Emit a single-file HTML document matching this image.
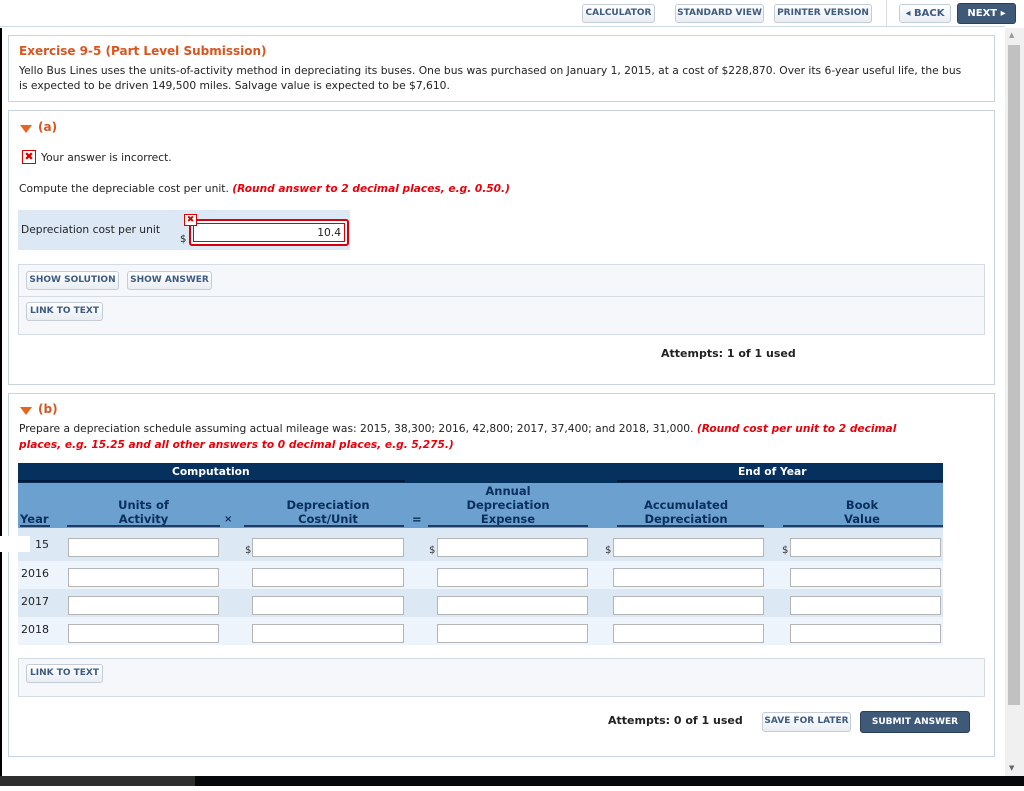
<!DOCTYPE html>
<html><head><meta charset="utf-8"><style>
*{box-sizing:border-box;margin:0;padding:0}
body{width:1024px;height:791px;position:relative;overflow:hidden;background:#fff;font-family:"DejaVu Sans","Liberation Sans",sans-serif;font-size:10.7px;color:#222}
.a{position:absolute}
.btn{position:absolute;height:19px;border:1px solid #c4ccd6;border-radius:3px;background:linear-gradient(#fff,#e9edf2);color:#3d5b80;font-weight:bold;font-size:9px;text-align:center;line-height:17px;white-space:nowrap}
.dk{background:#3f5a78;border-color:#2c4058;color:#fff}
.box{position:absolute;border:1px solid #c8d4e2;background:#fff}
.panel{position:absolute;border:1px solid #d3dbe5;background:#f5f7fa}
.inp{position:absolute;height:19px;border:1px solid #b5b5b5;background:#fff}
.red{color:#e8000b;font-style:italic;font-weight:bold;font-size:10.6px}
.or{color:#d9541e}
.tri{position:absolute;width:0;height:0;border-left:6px solid transparent;border-right:6px solid transparent;border-top:8px solid #e8631c}
.hd{position:absolute;color:#0a2f5c;font-weight:bold;font-size:11.5px;text-align:center;line-height:14px}
.ul{position:absolute;height:2px;background:#1e3d66;top:525px}
.yr{position:absolute;left:21px;font-size:11px}
.d{position:absolute;font-size:10px;color:#333}
</style></head><body>
<div class="a" style="left:0;top:26px;width:1005px;height:1px;background:#d0d8e2"></div>
<div class="btn" style="left:582px;top:4px;width:73px">CALCULATOR</div>
<div class="btn" style="left:675px;top:4px;width:89px">STANDARD VIEW</div>
<div class="btn" style="left:774px;top:4px;width:98px">PRINTER VERSION</div>
<div class="a" style="left:886px;top:0;width:1px;height:26px;background:#d8dde3"></div>
<div class="btn" style="left:899px;top:4px;width:52px;font-size:10px">◂ BACK</div>
<div class="btn dk" style="left:957px;top:3px;width:59px;height:21px;line-height:19px;font-size:10px">NEXT ▸</div>
<div class="a" style="left:1005px;top:28px;width:19px;height:748px;background:#f0f0f0"></div>
<div class="a" style="left:1008px;top:45px;width:12px;height:660px;background:#c1c1c1"></div>
<div class="a" style="left:1009px;top:31px;font-size:7px;color:#999">▲</div>
<div class="a" style="left:1009px;top:764px;font-size:7px;color:#666">▼</div>
<div class="a" style="left:0;top:28px;width:2px;height:748px;background:#000"></div>

<div class="box" style="left:8px;top:35px;width:987px;height:67px"></div>
<div class="a or" style="left:19px;top:44px;font-weight:bold;font-size:12px">Exercise 9-5 (Part Level Submission)</div>
<div class="a" style="left:19px;top:63px;width:945px;line-height:15px">Yello Bus Lines uses the units-of-activity method in depreciating its buses. One bus was purchased on January 1, 2015, at a cost of $228,870. Over its 6-year useful life, the bus is expected to be driven 149,500 miles. Salvage value is expected to be $7,610.</div>

<div class="box" style="left:8px;top:110px;width:987px;height:275px"></div>
<div class="tri" style="left:20px;top:125px"></div>
<div class="a or" style="left:38px;top:120px;font-size:12px;font-weight:bold">(a)</div>
<div class="a" style="left:22px;top:150px;width:14px;height:14px;border:1px solid #d00;color:#d00;font-size:11px;font-weight:bold;text-align:center;line-height:12px">✖</div>
<div class="a" style="left:41px;top:151px">Your answer is incorrect.</div>
<div class="a" style="left:19px;top:182px">Compute the depreciable cost per unit. <span class="red">(Round answer to 2 decimal places, e.g. 0.50.)</span></div>
<div class="a" style="left:18px;top:210px;width:332px;height:40px;background:#dde8f5"></div>
<div class="a" style="left:21px;top:223px">Depreciation cost per unit</div>
<div class="a" style="left:180px;top:234px;font-size:10px">$</div>
<div class="a" style="left:189px;top:219px;width:160px;height:27px;border:2px solid #d8000c;border-radius:3px;background:#fff;padding:2px"><div style="border:1px solid #d8000c;height:100%;text-align:right;padding-right:3px;line-height:17px">10.4</div></div>
<div class="a" style="left:184px;top:214px;width:13px;height:12px;border:1px solid #d00;background:#fff;color:#d00;font-size:9px;font-weight:bold;text-align:center;line-height:10px">✖</div>
<div class="panel" style="left:18px;top:264px;width:967px;height:71px"></div>
<div class="a" style="left:19px;top:296px;width:965px;height:1px;background:#d3dbe5"></div>
<div class="btn" style="left:26px;top:271px;width:93px">SHOW SOLUTION</div>
<div class="btn" style="left:127px;top:271px;width:85px">SHOW ANSWER</div>
<div class="btn" style="left:26px;top:302px;width:77px">LINK TO TEXT</div>
<div class="a" style="left:661px;top:347px;font-weight:bold;font-size:11px">Attempts: 1 of 1 used</div>

<div class="box" style="left:8px;top:393px;width:987px;height:364px"></div>
<div class="tri" style="left:20px;top:407px"></div>
<div class="a or" style="left:38px;top:402px;font-size:12px;font-weight:bold">(b)</div>
<div class="a" style="left:19px;top:421px;width:912px;line-height:15px">Prepare a depreciation schedule assuming actual mileage was: 2015, 38,300; 2016, 42,800; 2017, 37,400; and 2018, 31,000. <span class="red">(Round cost per unit to 2 decimal places, e.g. 15.25 and all other answers to 0 decimal places, e.g. 5,275.)</span></div>

<div class="a" style="left:18px;top:463px;width:925px;height:20px;background:#06305e"></div>
<div class="a" style="left:18px;top:480px;width:387px;height:2px;background:#021a38"></div>
<div class="a" style="left:617px;top:480px;width:326px;height:2px;background:#021a38"></div>
<div class="a" style="left:172px;top:465px;color:#fff;font-weight:bold">Computation</div>
<div class="a" style="left:738px;top:465px;color:#fff;font-weight:bold">End of Year</div>
<div class="a" style="left:18px;top:483px;width:925px;height:45px;background:#6ba0cf"></div>
<div class="hd" style="left:20px;top:512px;text-align:left">Year</div>
<div class="ul" style="left:20px;width:30px"></div>
<div class="hd" style="left:68px;top:498px;width:151px">Units of<br>Activity</div>
<div class="ul" style="left:67px;width:153px"></div>
<div class="hd" style="left:224px;top:513px;font-size:10px">×</div>
<div class="hd" style="left:252px;top:498px;width:152px">Depreciation<br>Cost/Unit</div>
<div class="ul" style="left:244px;width:160px"></div>
<div class="hd" style="left:412px;top:512px">=</div>
<div class="hd" style="left:428px;top:484px;width:160px">Annual<br>Depreciation<br>Expense</div>
<div class="ul" style="left:428px;width:160px"></div>
<div class="hd" style="left:608px;top:498px;width:156px">Accumulated<br>Depreciation</div>
<div class="ul" style="left:617px;width:147px"></div>
<div class="hd" style="left:783px;top:498px;width:158px">Book<br>Value</div>
<div class="ul" style="left:783px;width:160px"></div>

<div class="a" style="left:18px;top:528px;width:925px;height:33px;background:#dde8f5"></div>
<div class="a" style="left:18px;top:561px;width:925px;height:28px;background:#eef4fb"></div>
<div class="a" style="left:18px;top:589px;width:925px;height:28px;background:#dde8f5"></div>
<div class="a" style="left:18px;top:617px;width:925px;height:28px;background:#eef4fb"></div>
<div class="a" style="left:0;top:536px;width:30px;height:16px;background:#fff"></div>
<div class="yr" style="left:35px;top:538px">15</div>
<div class="yr" style="top:567px">2016</div>
<div class="yr" style="top:595px">2017</div>
<div class="yr" style="top:623px">2018</div>
<div class="d" style="left:245px;top:545px">$</div>
<div class="d" style="left:429px;top:545px">$</div>
<div class="d" style="left:605px;top:545px">$</div>
<div class="d" style="left:782px;top:545px">$</div>
<div class="inp" style="left:68px;top:538px;width:151px"></div>
<div class="inp" style="left:252px;top:538px;width:152px"></div>
<div class="inp" style="left:437px;top:538px;width:151px"></div>
<div class="inp" style="left:613px;top:538px;width:151px"></div>
<div class="inp" style="left:790px;top:538px;width:151px"></div>
<div class="inp" style="left:68px;top:568px;width:151px"></div>
<div class="inp" style="left:252px;top:568px;width:152px"></div>
<div class="inp" style="left:437px;top:568px;width:151px"></div>
<div class="inp" style="left:613px;top:568px;width:151px"></div>
<div class="inp" style="left:790px;top:568px;width:151px"></div>
<div class="inp" style="left:68px;top:596px;width:151px"></div>
<div class="inp" style="left:252px;top:596px;width:152px"></div>
<div class="inp" style="left:437px;top:596px;width:151px"></div>
<div class="inp" style="left:613px;top:596px;width:151px"></div>
<div class="inp" style="left:790px;top:596px;width:151px"></div>
<div class="inp" style="left:68px;top:624px;width:151px"></div>
<div class="inp" style="left:252px;top:624px;width:152px"></div>
<div class="inp" style="left:437px;top:624px;width:151px"></div>
<div class="inp" style="left:613px;top:624px;width:151px"></div>
<div class="inp" style="left:790px;top:624px;width:151px"></div>

<div class="panel" style="left:18px;top:658px;width:967px;height:39px"></div>
<div class="btn" style="left:26px;top:664px;width:77px">LINK TO TEXT</div>
<div class="a" style="left:608px;top:714px;font-weight:bold;font-size:11px">Attempts: 0 of 1 used</div>
<div class="btn" style="left:762px;top:712px;width:89px;height:20px">SAVE FOR LATER</div>
<div class="btn dk" style="left:860px;top:711px;width:110px;height:22px;line-height:20px">SUBMIT ANSWER</div>

<div class="a" style="left:0;top:776px;width:1024px;height:10px;background:#05070a"></div>
<div class="a" style="left:0;top:776px;width:195px;height:10px;background:#2e2e2e"></div>
<div class="a" style="left:0;top:786px;width:1024px;height:5px;background:#fff"></div>
</body></html>
